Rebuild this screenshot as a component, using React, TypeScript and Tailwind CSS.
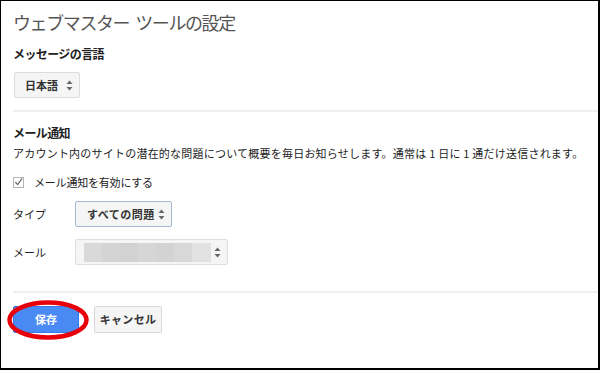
import React from "react";

const font = { fontFamily: '"Noto Sans CJK JP", "Noto Sans", sans-serif' };

function Arrows() {
  return (
    <svg width="7" height="11" viewBox="0 0 7 11" className="shrink-0">
      <path d="M3.5 0.5 L6.5 4 L0.5 4 Z" fill="#666" />
      <path d="M3.5 10.5 L6.5 7 L0.5 7 Z" fill="#666" />
    </svg>
  );
}

export default function App() {
  return (
    <div
      className="w-[600px] h-[370px] bg-white border-t border-l border-r-2 border-b-2 border-black overflow-hidden relative"
      style={font}
    >
      <div className="flex flex-col pt-[8px]">
        <div className="pl-[12px] h-[26px] leading-[26px] text-[18px] text-[#555] tracking-[-1.4px] whitespace-nowrap flex gap-[6px]">
          <span>ウェブマスター</span>
          <span>ツールの設定</span>
        </div>
        <div className="pl-[12px] mt-[11px] h-[16px] leading-[16px] text-[12px] font-bold text-[#222] tracking-[-0.6px] whitespace-nowrap">
          メッセージの言語
        </div>
        <div className="pl-[13px] mt-[10px] flex">
          <div className="w-[66px] h-[26px] bg-[#f5f5f5] border border-[#dcdcdc] rounded-[2px] flex items-center pl-[10px] pr-[6px] justify-between">
            <span className="text-[11px] font-bold text-[#333] leading-none whitespace-nowrap">日本語</span>
            <Arrows />
          </div>
        </div>
        <div className="ml-[12px] mt-[12px] h-[2px] bg-[#efefef]" />
        <div className="pl-[12px] mt-[13px] h-[16px] leading-[16px] text-[12px] font-bold text-[#222] tracking-[-0.6px] whitespace-nowrap">
          メール通知
        </div>
        <div className="pl-[12px] mt-[4px] h-[16px] leading-[16px] text-[11px] text-[#222] tracking-[0.22px] whitespace-nowrap">
          アカウント内のサイトの潜在的な問題について概要を毎日お知らせします。通常は 1 日に 1 通だけ送信されます。
        </div>
        <div className="pl-[12px] mt-[13px] h-[16px] flex items-center gap-[10px]">
          <div className="w-[11px] h-[11px] border border-[#b5b5b5] bg-white flex items-center justify-center">
            <svg width="10" height="10" viewBox="0 0 10 10">
              <path d="M1.5 5 L4 7.8 L9 1" stroke="#666" strokeWidth="1.3" fill="none" />
            </svg>
          </div>
          <span className="text-[11px] text-[#222] leading-none tracking-[-0.2px] whitespace-nowrap">メール通知を有効にする</span>
        </div>
        <div className="pl-[12px] mt-[11px] flex items-center">
          <span className="w-[62px] text-[11px] text-[#222] leading-none whitespace-nowrap">タイプ</span>
          <div className="w-[97px] h-[26px] bg-[#f5f5f5] border border-[#a6b8d4] rounded-[2px] flex items-center pl-[11px] pr-[6px] justify-between">
            <span className="text-[11px] font-bold text-[#333] leading-none tracking-[0.5px] whitespace-nowrap">すべての問題</span>
            <Arrows />
          </div>
        </div>
        <div className="pl-[12px] mt-[12px] flex items-center">
          <span className="w-[62px] text-[11px] text-[#222] leading-none whitespace-nowrap">メール</span>
          <div className="w-[153px] h-[26px] bg-[#f5f5f5] border border-[#dedede] rounded-[2px] flex items-center pl-[8px] pr-[6px] justify-between">
            <div className="flex h-[19px] w-[127px]">
              <div className="w-[18px] bg-[#d9d9d9]" />
              <div className="w-[18px] bg-[#d4d4d4]" />
              <div className="w-[18px] bg-[#d2d2d2]" />
              <div className="w-[18px] bg-[#d6d6d6]" />
              <div className="w-[18px] bg-[#d3d3d3]" />
              <div className="w-[18px] bg-[#d8d8d8]" />
              <div className="w-[19px] bg-[#e2e2e2]" />
            </div>
            <Arrows />
          </div>
        </div>
        <div className="ml-[12px] mt-[26px] h-[2px] bg-[#efefef]" />
        <div className="pl-[12px] mt-[13px] flex items-center gap-[15px]">
          <div className="w-[66px] h-[27px] bg-[#4a8af4] border border-[#3b78e7] rounded-[2px] flex items-center justify-center">
            <span className="text-[11px] font-bold text-white leading-none whitespace-nowrap">保存</span>
          </div>
          <div className="w-[68px] h-[27px] bg-[#f5f5f5] border border-[#d9d9d9] rounded-[2px] flex items-center justify-center">
            <span className="text-[11px] font-bold text-[#333] leading-none tracking-[0.3px] whitespace-nowrap">キャンセル</span>
          </div>
        </div>
      </div>
      <svg
        className="absolute left-[5px] top-[299px] pointer-events-none"
        width="84"
        height="42"
        viewBox="0 0 84 42"
      >
        <ellipse cx="42" cy="20" rx="38.5" ry="17.5" fill="none" stroke="#e8000b" strokeWidth="4.5" />
      </svg>
    </div>
  );
}
